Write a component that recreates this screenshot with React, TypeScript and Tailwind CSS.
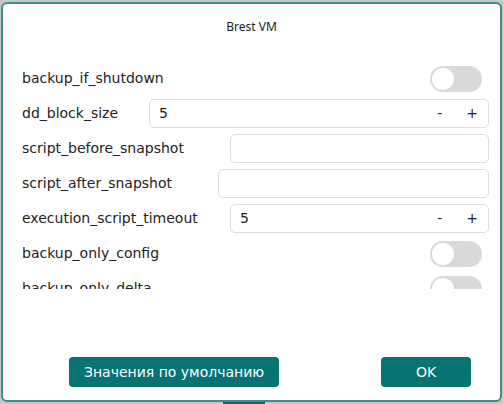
const font = { fontFamily: '"DejaVu Sans", sans-serif' }

const Toggle = () => (
  <div className="w-[52px] h-[26px] rounded-full bg-[#d9d9d9] p-[2px] flex items-center shrink-0">
    <div className="w-[22px] h-[22px] rounded-full bg-white" />
  </div>
)

const TextInput = ({ width }: { width: string }) => (
  <div className={`${width} h-[29px] border border-[#dcdcdc] rounded-[5px] bg-white`} />
)

const NumberInput = ({ width, value }: { width: string; value: string }) => (
  <div className={`${width} h-[29px] border border-[#dcdcdc] rounded-[5px] bg-white flex items-center pl-[9px] pr-[10px] text-[14px] text-[#222]`}>
    <span className="flex-1">{value}</span>
    <span className="mr-[24px]">-</span>
    <span>+</span>
  </div>
)

const Row = ({ label, children, toggle }: { label: string; children: React.ReactNode; toggle?: boolean }) => (
  <div className={`h-[29px] shrink-0 flex items-center justify-between ${toggle ? 'pr-[7px]' : ''}`}>
    <span>{label}</span>
    {children}
  </div>
)

export default function App() {
  return (
    <div className="w-[503px] h-[404px] bg-[#c8c8c8] overflow-hidden" style={font}>
      <div className="mt-[2px] ml-[1px] w-[501px] h-[400px] border-2 border-[#3e8e8e] rounded-[6px] bg-white flex flex-col">
        <div className="h-[46px] shrink-0 flex items-center justify-center text-[12px] text-[#222]" style={{ fontFamily: '"Noto Sans", sans-serif' }}>
          Brest VM
        </div>
        <div className="h-[239px] shrink-0 overflow-hidden pl-[19px] pr-[11px] pt-[14px] flex flex-col gap-[6px] text-[14px] text-[#222]">
          <Row label="backup_if_shutdown" toggle>
            <Toggle />
          </Row>
          <Row label="dd_block_size">
            <NumberInput width="w-[340px]" value="5" />
          </Row>
          <Row label="script_before_snapshot">
            <TextInput width="w-[259px]" />
          </Row>
          <Row label="script_after_snapshot">
            <TextInput width="w-[271px]" />
          </Row>
          <Row label="execution_script_timeout">
            <NumberInput width="w-[259px]" value="5" />
          </Row>
          <Row label="backup_only_config" toggle>
            <Toggle />
          </Row>
          <Row label="backup_only_delta" toggle>
            <Toggle />
          </Row>
        </div>
        <div className="flex-1 flex items-end pb-[13px] pl-[66px] pr-[29px] justify-between">
          <button className="w-[210px] h-[30px] rounded-[4px] bg-[#087373] text-white text-[14px]">
            Значения по умолчанию
          </button>
          <button className="w-[90px] h-[30px] rounded-[4px] bg-[#087373] text-white text-[14px]">
            OK
          </button>
        </div>
      </div>
      <div className="ml-[223px] w-[42px] h-[2px] bg-[#0d6b6b]" />
    </div>
  )
}
